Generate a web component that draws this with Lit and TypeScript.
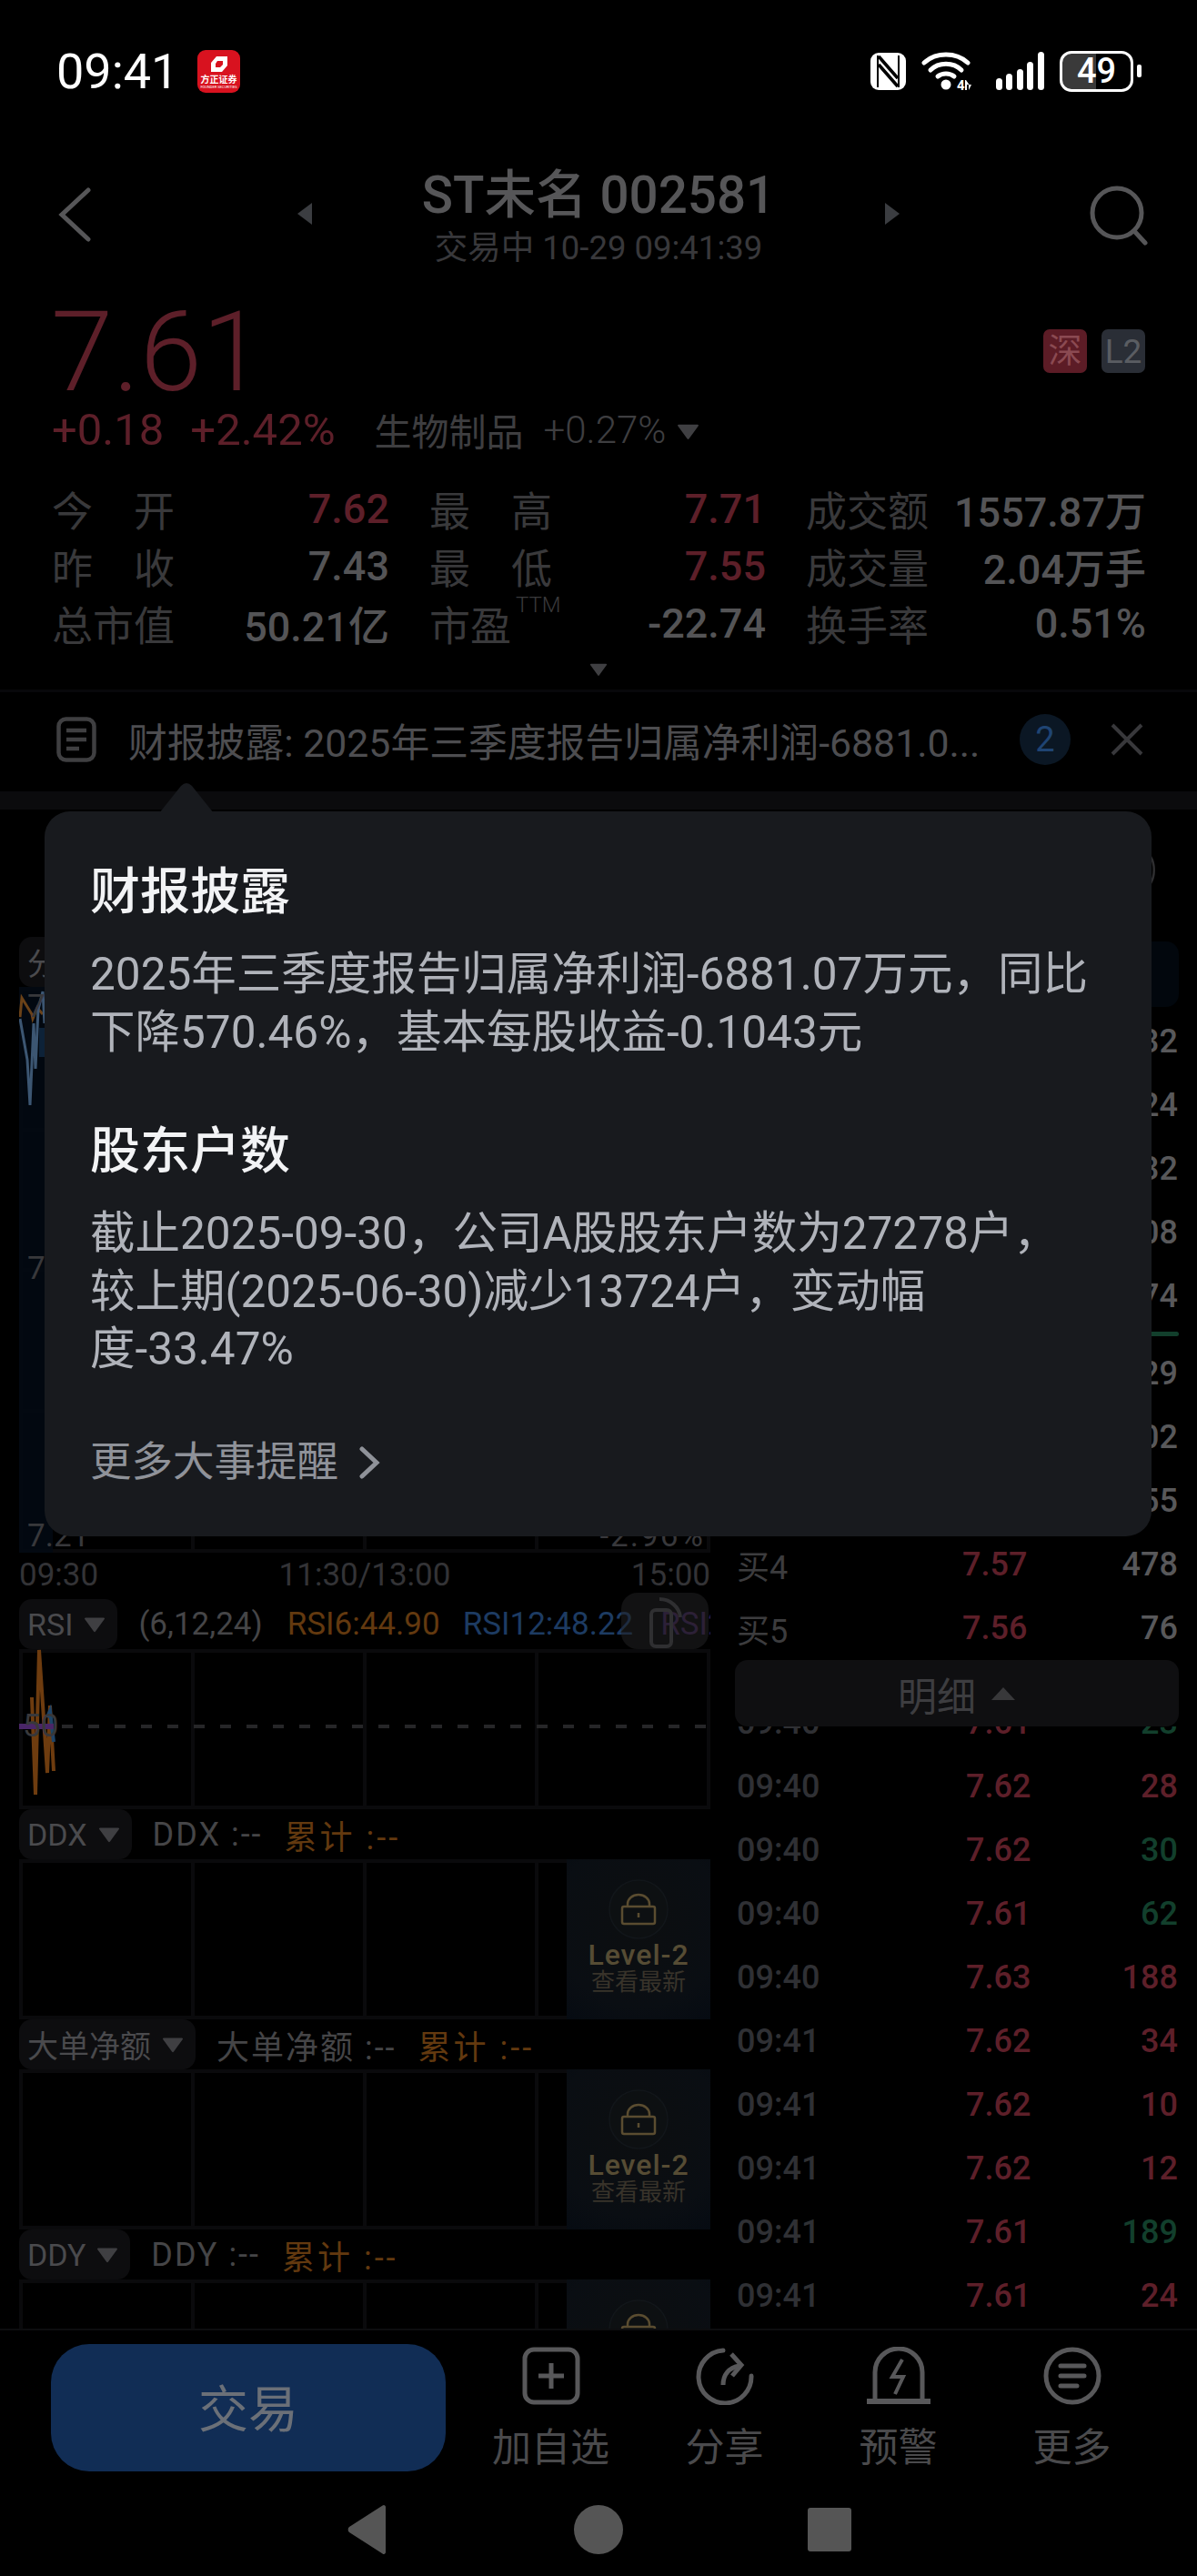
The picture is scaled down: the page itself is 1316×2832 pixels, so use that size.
import { LitElement, css, html, svg } from 'lit';
import { customElement } from 'lit/decorators.js';

const stats = [
  [['今 开', '7.62', 'up'], ['最 高', '7.71', 'up'], ['成交额', '1557.87万', '']],
  [['昨 收', '7.43', ''], ['最 低', '7.55', 'up'], ['成交量', '2.04万手', '']],
  [['总市值', '50.21亿', ''], ['市盈', '-22.74', ''], ['换手率', '0.51%', '']],
];

const bookVolumes = ['132', '224', '132', '108', '174'];
const bookBuy = [
  ['买1', '', '129'],
  ['买2', '', '102'],
  ['买3', '', '155'],
  ['买4', '7.57', '478'],
  ['买5', '7.56', '76'],
];

const ticks = [
  ['09:40', '7.61', '23', 'down'],
  ['09:40', '7.62', '28', 'up'],
  ['09:40', '7.62', '30', 'down'],
  ['09:40', '7.61', '62', 'down'],
  ['09:40', '7.63', '188', 'up'],
  ['09:41', '7.62', '34', 'up'],
  ['09:41', '7.62', '10', 'up'],
  ['09:41', '7.62', '12', 'up'],
  ['09:41', '7.61', '189', 'down'],
  ['09:41', '7.61', '24', 'up'],
];

@customElement('app-root')
export class AppRoot extends LitElement {
  static styles = css`
    :host {
      display: block;
      position: relative;
      width: 1316px;
      height: 2832px;
      overflow: hidden;
      background: #000;
      font-family: Roboto, 'Noto Sans CJK SC', sans-serif;
      color: #555;
    }

    svg {
      display: block;
    }

    /* status bar */
    .status {
      height: 160px;
      box-sizing: border-box;
      padding: 55px 61px 0 62px;
      display: flex;
      align-items: flex-start;
    }
    .clock {
      font-size: 54px;
      line-height: 48px;
      color: #fff;
      width: 155px;
    }
    .logo {
      width: 47px;
      height: 47px;
      border-radius: 9px;
      background: #d8121f;
      display: flex;
      flex-direction: column;
      align-items: center;
      color: #fff;
      overflow: hidden;
    }
    .logo span {
      font-size: 10px;
      font-weight: 700;
      line-height: 10px;
      white-space: nowrap;
    }
    .logo small {
      font-size: 4px;
      line-height: 5px;
      white-space: nowrap;
    }
    .status-right {
      margin-left: auto;
      display: flex;
      align-items: center;
      gap: 17px;
      height: 46px;
    }
    .battery {
      position: relative;
      width: 81px;
      height: 45px;
      box-sizing: border-box;
      border: 3px solid #fff;
      border-radius: 13px;
      overflow: hidden;
      display: flex;
      align-items: center;
      justify-content: center;
      font-size: 38px;
      font-weight: 500;
      color: #fff;
      background: linear-gradient(90deg, #3a3a3a 49%, #000 49%);
      margin-right: 4px;
    }
    .nub {
      width: 5px;
      height: 14px;
      border-radius: 2px;
      background: #fff;
      margin-left: -17px;
    }

    /* header */
    .header {
      height: 150px;
      box-sizing: border-box;
      padding: 0 53px 0 62px;
      display: flex;
      align-items: flex-start;
    }
    .back {
      margin-top: 46px;
    }
    .search {
      margin-top: 44px;
      margin-left: auto;
    }
    .title-wrap {
      width: 664px;
      margin-left: 224px;
      display: flex;
      align-items: flex-start;
      justify-content: space-between;
    }
    .side-arrow {
      margin-top: 62px;
    }
    .title-block {
      text-align: center;
    }
    .title {
      font-size: 56.5px;
      line-height: 70px;
      margin-top: 20px;
      color: #565658;
      font-weight: 500;
      white-space: nowrap;
    }
    .subtitle {
      font-size: 36.5px;
      line-height: 46px;
      color: #38383b;
      white-space: nowrap;
    }

    /* quote */
    .quote {
      height: 217px;
      box-sizing: border-box;
      padding: 0 57px;
      position: relative;
    }
    .price {
      font-size: 123px;
      line-height: 134px;
      font-weight: 300;
      color: #5d1f29;
      padding-top: 10px;
      margin-left: -1px;
    }
    .change {
      display: flex;
      align-items: center;
      height: 56px;
      font-size: 49px;
      white-space: nowrap;
      margin-top: -10px;
    }
    .change .up {
      color: #5d1f29;
    }
    .change .pct {
      margin-left: 29px;
    }
    .change .sector {
      margin-left: 43px;
      font-size: 41px;
      color: #3e3e40;
    }
    .change .sector-pct {
      margin-left: 22px;
      font-size: 42px;
      color: #3e3e40;
      font-weight: 300;
    }
    .change svg {
      margin-left: 12px;
      margin-top: 4px;
    }
    .badges {
      position: absolute;
      top: 52px;
      right: 57px;
      display: flex;
      gap: 16px;
    }
    .badge {
      width: 48px;
      height: 48px;
      border-radius: 7px;
      display: flex;
      align-items: center;
      justify-content: center;
      font-size: 37px;
      line-height: 1;
    }
    .badge.sz {
      background: #5c1c26;
      color: #8b4a52;
    }
    .badge.l2 {
      background: #2a2e36;
      color: #5a5d62;
    }

    /* stats */
    .stats {
      height: 231px;
      box-sizing: border-box;
      padding: 0 57px;
      display: flex;
      flex-direction: column;
    }
    .stat-row {
      display: grid;
      grid-template-columns: 371px 370px 374px;
      column-gap: 44px;
      height: 63px;
    }
    .stat {
      display: flex;
      align-items: center;
      justify-content: space-between;
      white-space: nowrap;
    }
    .stat-label {
      position: relative;
      width: 135px;
      font-size: 45px;
      color: #39393b;
      text-align: justify;
      text-align-last: justify;
    }
    .stat-label.plain {
      text-align-last: left;
    }
    .stat-value {
      font-size: 45px;
      font-weight: 500;
      color: #545456;
    }
    .stat-value.up {
      color: #5d1f29;
    }
    .ttm {
      position: absolute;
      left: 95px;
      top: 0;
      font-size: 24px;
      line-height: 24px;
      font-weight: 300;
      color: #3a3a3c;
    }
    .expand {
      display: flex;
      justify-content: center;
      margin-top: 12px;
    }

    /* news strip */
    .news {
      height: 112px;
      box-sizing: border-box;
      border-top: 3px solid #08080a;
      padding: 0 59px 6px 62px;
      display: flex;
      align-items: center;
    }
    .news-text {
      margin-left: 35px;
      width: 946px;
      font-size: 42.8px;
      white-space: nowrap;
      overflow: hidden;
      color: #4d4d50;
    }
    .news-count {
      margin-left: 34px;
      width: 56px;
      height: 56px;
      border-radius: 50%;
      background: #0b1724;
      color: #1f4473;
      font-size: 38px;
      display: flex;
      align-items: center;
      justify-content: center;
    }
    .news-close {
      margin-left: auto;
    }
    .band {
      height: 20px;
      background: #0b0b0d;
    }

    /* market area */
    .market {
      height: 1672px;
      overflow: hidden;
      display: flex;
      padding-left: 21px;
      gap: 27px;
      border-bottom: 2px solid #0d0d0f;
      box-sizing: border-box;
    }
    .left {
      width: 760px;
      flex: none;
    }
    .right {
      width: 488px;
      flex: none;
    }
    .top-gap {
      height: 140px;
    }
    .tab-row {
      height: 55px;
      display: flex;
      align-items: center;
      white-space: nowrap;
      font-size: 35px;
      position: relative;
    }
    .tab {
      height: 55px;
      box-sizing: border-box;
      border-radius: 14px;
      background: #0d0d0f;
      padding: 0 13px 0 9px;
      display: flex;
      align-items: center;
      gap: 12px;
      color: #4a4a4d;
      margin-right: 23px;
      font-size: 34px;
    }
    .params {
      color: #454547;
      margin-right: 27px;
    }
    .orange {
      color: #63390f;
      margin-right: 25px;
    }
    .blue {
      color: #1d3b62;
      margin-right: 30px;
    }
    .purple {
      color: #3b2050;
    }
    .clip {
      flex: 1;
      min-width: 0;
      overflow: hidden;
      display: flex;
    }
    .ind-name {
      font-size: 36px;
      letter-spacing: 2px;
      color: #454547;
      margin-right: 24px;
    }
    .ind-sum {
      font-size: 36px;
      letter-spacing: 3px;
      color: #63390f;
    }
    .rotate {
      position: absolute;
      right: 2px;
      top: -7px;
      width: 96px;
      height: 62px;
      border-radius: 18px;
      background: rgba(32, 32, 34, 0.55);
      display: flex;
      align-items: center;
      justify-content: center;
    }

    .chart {
      position: relative;
      display: grid;
      grid-template-columns: repeat(4, 1fr);
      gap: 4px;
      padding: 4px;
      box-sizing: border-box;
      background: #0a0a0c;
      overflow: hidden;
    }
    .chart > i {
      background: #000;
      display: block;
    }
    .chart.main {
      height: 622px;
      grid-template-rows: repeat(4, 1fr);
    }
    .chart.sub {
      height: 176px;
    }
    .chart-draw {
      position: absolute;
      left: 0;
      top: 0;
    }
    .axis-label {
      position: absolute;
      font-size: 35px;
      line-height: 40px;
      color: #38383b;
    }
    .axis-label.pct {
      letter-spacing: 2px;
    }
    .axis {
      height: 49px;
      padding-bottom: 2px;
      display: flex;
      justify-content: space-between;
      align-items: center;
      font-size: 35px;
      color: #333336;
    }
    .locked {
      position: absolute;
      top: 0;
      bottom: 0;
      right: 0;
      width: 158px;
      background: radial-gradient(circle at 50% 40%, #0c0e10 0%, #0a0e13 70%, #060b12 100%);
      display: flex;
      flex-direction: column;
      align-items: center;
      padding-top: 22px;
      box-sizing: border-box;
    }
    .locked svg {
      flex: none;
    }
    .locked b {
      font-size: 32px;
      line-height: 34px;
      font-weight: 500;
      letter-spacing: 1px;
      color: #564c34;
    }
    .locked span {
      font-size: 26px;
      line-height: 26px;
      color: #38332a;
    }

    /* right column */
    .right-gap {
      height: 145px;
      display: flex;
      justify-content: flex-end;
      align-items: flex-start;
    }
    .right-gap svg {
      margin: 51px 26px 0 0;
    }
    .book-tab {
      height: 72px;
      border-radius: 14px;
      background: #02070d;
    }
    .rows {
      margin-top: 3px;
    }
    .row {
      height: 70px;
      display: grid;
      grid-template-columns: 248px 90px 1fr;
      align-items: center;
      font-size: 36px;
      font-weight: 500;
      padding: 0 1px 0 2px;
    }
    .row .who {
      color: #3c3c3e;
      font-weight: 400;
    }
    .row .p {
      color: #5d1f29;
    }
    .row .v {
      text-align: right;
      color: #58585a;
    }
    .ratio {
      height: 5px;
      margin: 4px 0 6px;
      border-radius: 3px;
      background: #123f2c;
    }
    .detail-bar {
      height: 73px;
      border-radius: 14px;
      background: #0f0f11;
      display: flex;
      align-items: center;
      justify-content: center;
      gap: 16px;
      font-size: 43px;
      color: #3d3d40;
    }
    .ticks {
      height: 700px;
      overflow: hidden;
    }
    .ticks .list {
      margin-top: -39px;
    }
    .ticks .row {
      grid-template-columns: 252px 90px 1fr;
    }
    .ticks .who {
      color: #2f3034;
      font-weight: 500;
    }
    .row .v.up {
      color: #5d1f29;
    }
    .row .v.down {
      color: #123f2c;
    }

    /* bottom bar */
    .actions {
      height: 170px;
      padding: 15px 0 0 56px;
      box-sizing: border-box;
      display: flex;
    }
    .trade {
      width: 434px;
      height: 140px;
      box-sizing: border-box;
      padding-bottom: 6px;
      border-radius: 42px;
      background: #112d55;
      display: flex;
      align-items: center;
      justify-content: center;
      font-size: 55px;
      color: #6b7078;
      flex: none;
      margin-right: 20px;
    }
    .action {
      width: 191px;
      display: flex;
      flex-direction: column;
      align-items: center;
      color: #4a4a4c;
      font-size: 43px;
      line-height: 50px;
      flex: none;
      padding-top: 3px;
    }
    .action svg {
      margin-bottom: 22px;
    }
    .nav {
      display: flex;
      align-items: center;
      justify-content: center;
      height: 60px;
      margin-top: 19px;
    }
    .nav div {
      width: 254px;
      display: flex;
      justify-content: center;
    }

    /* popover */
    .pop {
      position: absolute;
      left: 49px;
      top: 892px;
      width: 1217px;
      height: 797px;
      box-sizing: border-box;
      border-radius: 28px;
      background: #181a1e;
      padding: 52px 50px 0;
      white-space: nowrap;
    }
    .pop-arrow {
      position: absolute;
      left: 124px;
      top: -32px;
    }
    .pop h3 {
      margin: 0;
      font-size: 55px;
      line-height: 72px;
      font-weight: 500;
      color: #f2f3f5;
    }
    .pop p {
      margin: 24px 0 0;
      font-size: 49.5px;
      line-height: 63.5px;
      color: #b0b3ba;
    }
    .pop section + section {
      margin-top: 62px;
    }
    .pop-more {
      display: flex;
      align-items: center;
      gap: 22px;
      margin-top: 62px;
      font-size: 45.5px;
      line-height: 60px;
      color: #8f9299;
    }
  `;

  private tri(w = 24, h = 18, fill = '#3f3f42') {
    return html`<svg width=${w} height=${h} viewBox="0 0 24 18">
      <path d="M2 1.500h20a1 1 0 0 1 .8 1.600L13 16.500a1.200 1.200 0 0 1-2 0L1.200 3.100A1 1 0 0 1 2 1.500z" fill=${fill}></path>
    </svg>`;
  }

  private statusIcons() {
    return html`
      <svg width="39" height="41" viewBox="0 0 39 41">
        <path d="M9 0h21a9 9 0 0 1 9 9v23a9 9 0 0 1-9 9H9a9 9 0 0 1-9-9V9a9 9 0 0 1 9-9z" fill="#fff"></path>
        <path d="M8 3v35M31 3v35" stroke="#000" stroke-width="2"></path>
        <path d="M9 4l21 24M9 13l21 24" stroke="#000" stroke-width="3.500" fill="none"></path>
      </svg>
      <svg width="56" height="44" viewBox="0 0 56 44">
        <g fill="none" stroke="#fff" stroke-width="5" stroke-linecap="round">
          <path d="M3 13C16 1 38 1 51 13"></path>
          <path d="M10 21C19 12 35 12 44 21"></path>
          <path d="M18 28C23 24 31 24 36 28"></path>
        </g>
        <circle cx="27" cy="37" r="5.500" fill="#fff"></circle>
        <text x="39" y="43" font-size="15" font-weight="700" fill="#fff" font-family="Roboto">4</text>
        <path d="M49 32l3.500 5h-2.500v6h-2v-11zM52 43l3-6h-3z" fill="#fff"></path>
      </svg>
      <svg width="53" height="42" viewBox="0 0 53 42" style="margin-left:9px">
        <g fill="#fff">
          <rect x="0" y="29" width="7" height="13" rx="3.500"></rect>
          <rect x="11" y="24" width="7" height="18" rx="3.500"></rect>
          <rect x="23" y="19" width="7" height="23" rx="3.500"></rect>
          <rect x="34" y="11" width="7" height="31" rx="3.500"></rect>
          <rect x="46" y="0" width="7" height="42" rx="3.500"></rect>
        </g>
      </svg>
      <div class="battery">49</div>
      <div class="nub"></div>
    `;
  }

  private mainDraw() {
    return svg`
      <rect x="0" y="0" width="37" height="622" fill="#020912" opacity="0.9"></rect>
      <path d="M22 45h7v32h-7z" fill="#0d2238"></path>
      <polyline points="1,33 3,12 14,30 15,35 20,23 26,30" fill="none" stroke="#6b4218" stroke-width="3"></polyline>
      <polyline points="1,35 9,80 12,130 16,40 18,90 21,25 26,5 28,40" fill="none" stroke="#3c5672" stroke-width="3"></polyline>
    `;
  }

  private rsiDraw() {
    return svg`
      <line x1="47" y1="85" x2="760" y2="85" stroke="#262628" stroke-width="4" stroke-dasharray="12 17"></line>
      <polyline points="14,53 18,160 22,1 31,136 34,62 38,134" fill="none" stroke="#6e3c0f" stroke-width="4"></polyline>
      <polyline points="31,75 34,68 38,102" fill="none" stroke="#1e4468" stroke-width="4"></polyline>
      <rect x="0" y="82" width="38" height="6" fill="#4a2668"></rect>
    `;
  }

  private lockedBox() {
    return html`<div class="locked">
      <svg width="84" height="66" viewBox="0 0 84 66">
        <circle cx="42" cy="33" r="32" fill="#0d1012" stroke="#12161a" stroke-width="1.500"></circle>
        <rect x="24" y="30" width="36" height="19" rx="2" fill="none" stroke="#5a4c30" stroke-width="2.500"></rect>
        <path d="M30 30v-3a12 10 0 0 1 24 0v3" fill="none" stroke="#5a4c30" stroke-width="2.500"></path>
        <path d="M42 37v5" stroke="#5a4c30" stroke-width="2.500"></path>
      </svg>
      <b>Level-2</b>
      <span>查看最新</span>
    </div>`;
  }

  private cells(count: number) {
    return Array.from({ length: count }, () => html`<i></i>`);
  }

  private subChart(name: string) {
    return html`
      <div class="tab-row">
        <div class="tab">${name}${this.tri()}</div>
        <span class="ind-name">${name} :--</span>
        <span class="ind-sum">累计 :--</span>
      </div>
      <div class="chart sub">${this.cells(4)}${this.lockedBox()}</div>
    `;
  }

  render() {
    return html`
      <div class="status">
        <div class="clock">09:41</div>
        <div class="logo">
          <svg width="47" height="28" viewBox="0 0 47 28">
            <path fill-rule="evenodd" d="M21 7h12v10l-6 7H15V14zM22 12l-2 3v4h5l3-3v-4z" fill="#fff"></path>
          </svg>
          <span>方正证券</span>
          <small>FOUNDER SECURITIES</small>
        </div>
        <div class="status-right">${this.statusIcons()}</div>
      </div>

      <div class="header">
        <svg class="back" width="40" height="60" viewBox="0 0 40 60">
          <polyline points="35,3 6,30 35,57" fill="none" stroke="#565658" stroke-width="5" stroke-linecap="round"></polyline>
        </svg>
        <div class="title-wrap">
          <svg class="side-arrow" width="18" height="26" viewBox="0 0 18 26"><path d="M17 1v24L1 13z" fill="#3b3d41"></path></svg>
          <div class="title-block">
            <div class="title">ST未名 002581</div>
            <div class="subtitle">交易中 10-29 09:41:39</div>
          </div>
          <svg class="side-arrow" width="18" height="26" viewBox="0 0 18 26"><path d="M1 1v24l16-12z" fill="#3b3d41"></path></svg>
        </div>
        <svg class="search" width="66" height="66" viewBox="0 0 66 66">
          <circle cx="31" cy="30" r="27" fill="none" stroke="#565658" stroke-width="5"></circle>
          <path d="M50 50l12 13" stroke="#565658" stroke-width="5" stroke-linecap="round"></path>
        </svg>
      </div>

      <div class="quote">
        <div class="price">7.61</div>
        <div class="change">
          <span class="up">+0.18</span>
          <span class="up pct">+2.42%</span>
          <span class="sector">生物制品</span>
          <span class="sector-pct">+0.27%</span>
          ${this.tri(25, 19)}
        </div>
        <div class="badges">
          <div class="badge sz">深</div>
          <div class="badge l2">L2</div>
        </div>
      </div>

      <div class="stats">
        ${stats.map(
          (row) => html`<div class="stat-row">
            ${row.map(
              ([label, value, tone]) => html`<div class="stat">
                ${label === '市盈'
                  ? html`<span class="stat-label plain">市盈<span class="ttm">TTM</span></span>`
                  : html`<span class="stat-label">${label}</span>`}
                <span class="stat-value ${tone}">${value}</span>
              </div>`
            )}
          </div>`
        )}
        <div class="expand">${this.tri(20, 16)}</div>
      </div>

      <div class="news">
        <svg width="44" height="50" viewBox="0 0 44 50">
          <rect x="2.500" y="2.500" width="39" height="45" rx="8" fill="none" stroke="#3f3f41" stroke-width="4.500"></rect>
          <path d="M11 15h22M11 25h22M11 35h14" stroke="#3f3f41" stroke-width="4.500"></path>
        </svg>
        <div class="news-text">财报披露: 2025年三季度报告归属净利润-6881.0...</div>
        <div class="news-count">2</div>
        <svg class="news-close" width="36" height="36" viewBox="0 0 36 36">
          <path d="M2 2l32 32M34 2L2 34" stroke="#38383b" stroke-width="4"></path>
        </svg>
      </div>
      <div class="band"></div>

      <div class="market">
        <div class="left">
          <div class="top-gap"></div>
          <div class="tab-row"><div class="tab">分时</div></div>
          <div class="chart main">
            ${this.cells(16)}
            <svg class="chart-draw" width="760" height="622">${this.mainDraw()}</svg>
            <span class="axis-label" style="left:9px;top:2px">7.65</span>
            <span class="axis-label" style="left:9px;top:290px">7.43</span>
            <span class="axis-label" style="left:9px;bottom:-2px">7.21</span>
            <span class="axis-label pct" style="right:6px;bottom:-2px">-2.96%</span>
          </div>
          <div class="axis"><span>09:30</span><span>11:30/13:00</span><span>15:00</span></div>
          <div class="tab-row">
            <div class="tab">RSI${this.tri()}</div>
            <div class="clip">
              <span class="params">(6,12,24)</span>
              <span class="orange">RSI6:44.90</span>
              <span class="blue">RSI12:48.22</span>
              <span class="purple">RSI24:50.00</span>
            </div>
            <div class="rotate">
              <svg width="60" height="60" viewBox="0 0 60 60">
                <rect x="15" y="18" width="22" height="40" rx="5" fill="none" stroke="#2f2f31" stroke-width="4"></rect>
                <path d="M24 6c12 0 22 9 23 20" fill="none" stroke="#2f2f31" stroke-width="4"></path>
              </svg>
            </div>
          </div>
          <div class="chart sub">
            ${this.cells(4)}
            <svg class="chart-draw" width="760" height="176">${this.rsiDraw()}</svg>
            <span class="axis-label" style="left:4px;top:65px">50</span>
          </div>
          ${this.subChart('DDX')}
          ${this.subChart('大单净额')}
          ${this.subChart('DDY')}
        </div>

        <div class="right">
          <div class="right-gap">
            <svg width="6" height="31" viewBox="0 0 6 31"><path d="M1 1c5 8 5 21 0 29" fill="none" stroke="#2e2e30" stroke-width="2.500"></path></svg>
          </div>
          <div class="book-tab"></div>
          <div class="rows">
            ${bookVolumes.map(
              (v, i) => html`<div class="row"><span class="who">卖${5 - i}</span><span class="p"></span><span class="v">${v}</span></div>`
            )}
          </div>
          <div class="ratio"></div>
          ${bookBuy.map(
            ([who, p, v]) => html`<div class="row"><span class="who">${who}</span><span class="p">${p}</span><span class="v">${v}</span></div>`
          )}
          <div class="detail-bar">
            明细
            <svg width="28" height="16" viewBox="0 0 28 16"><path d="M14 1l13 14H1z" fill="#38383a"></path></svg>
          </div>
          <div class="ticks">
            <div class="list">
              ${ticks.map(
                ([t, p, v, tone]) => html`<div class="row"><span class="who">${t}</span><span class="p">${p}</span><span class="v ${tone}">${v}</span></div>`
              )}
            </div>
          </div>
        </div>
      </div>

      <div class="actions">
        <div class="trade">交易</div>
        <div class="action">
          <svg width="64" height="64" viewBox="0 0 64 64">
            <rect x="3" y="3" width="58" height="58" rx="10" fill="none" stroke="#58585a" stroke-width="5"></rect>
            <path d="M32 18v28M18 32h28" stroke="#58585a" stroke-width="5"></path>
          </svg>
          加自选
        </div>
        <div class="action">
          <svg width="64" height="64" viewBox="0 0 64 64">
            <path d="M30 4A29 29 0 1 0 61 32" fill="none" stroke="#58585a" stroke-width="5" stroke-linecap="round"></path>
            <path d="M30 42c0-11 6-19 18-21" fill="none" stroke="#58585a" stroke-width="5"></path>
            <polyline points="39,8 50,20 40,32" fill="none" stroke="#58585a" stroke-width="5"></polyline>
          </svg>
          分享
        </div>
        <div class="action">
          <svg width="70" height="64" viewBox="0 0 70 64">
            <path d="M9 58V28a26 26 0 0 1 52 0v30" fill="none" stroke="#58585a" stroke-width="5"></path>
            <path d="M0 60h70" stroke="#58585a" stroke-width="6"></path>
            <polyline points="39,14 28,33 40,33 31,52" fill="none" stroke="#58585a" stroke-width="4"></polyline>
          </svg>
          预警
        </div>
        <div class="action">
          <svg width="64" height="64" viewBox="0 0 64 64">
            <circle cx="32" cy="32" r="29" fill="none" stroke="#58585a" stroke-width="5"></circle>
            <path d="M19 21h26M19 32h26M19 43h18" stroke="#58585a" stroke-width="5" stroke-linecap="round"></path>
          </svg>
          更多
        </div>
      </div>
      <div class="nav">
        <div><svg width="44" height="56" viewBox="0 0 44 56"><path d="M42 3v50a2 2 0 0 1-3.400 1.400L2 31a4 4 0 0 1 0-6L38.600 1.600A2 2 0 0 1 42 3z" fill="#555"></path></svg></div>
        <div><svg width="54" height="54" viewBox="0 0 54 54"><circle cx="27" cy="27" r="27" fill="#555"></circle></svg></div>
        <div><svg width="48" height="48" viewBox="0 0 48 48"><rect width="48" height="48" rx="3" fill="#555"></rect></svg></div>
      </div>

      <div class="pop">
        <svg class="pop-arrow" width="64" height="34" viewBox="0 0 64 34"><path d="M2 34L26 4q6-6 12 0l24 30z" fill="#181a1e"></path></svg>
        <section>
          <h3>财报披露</h3>
          <p>2025年三季度报告归属净利润-6881.07万元，同比<br />下降570.46%，基本每股收益-0.1043元</p>
        </section>
        <section>
          <h3>股东户数</h3>
          <p>截止2025-09-30，公司A股股东户数为27278户，<br />较上期(2025-06-30)减少13724户，变动幅<br />度-33.47%</p>
        </section>
        <div class="pop-more">
          更多大事提醒
          <svg width="24" height="36" viewBox="0 0 24 36">
            <polyline points="4,3 20,18 4,33" fill="none" stroke="#8f9299" stroke-width="5" stroke-linecap="round"></polyline>
          </svg>
        </div>
      </div>
    `;
  }
}
